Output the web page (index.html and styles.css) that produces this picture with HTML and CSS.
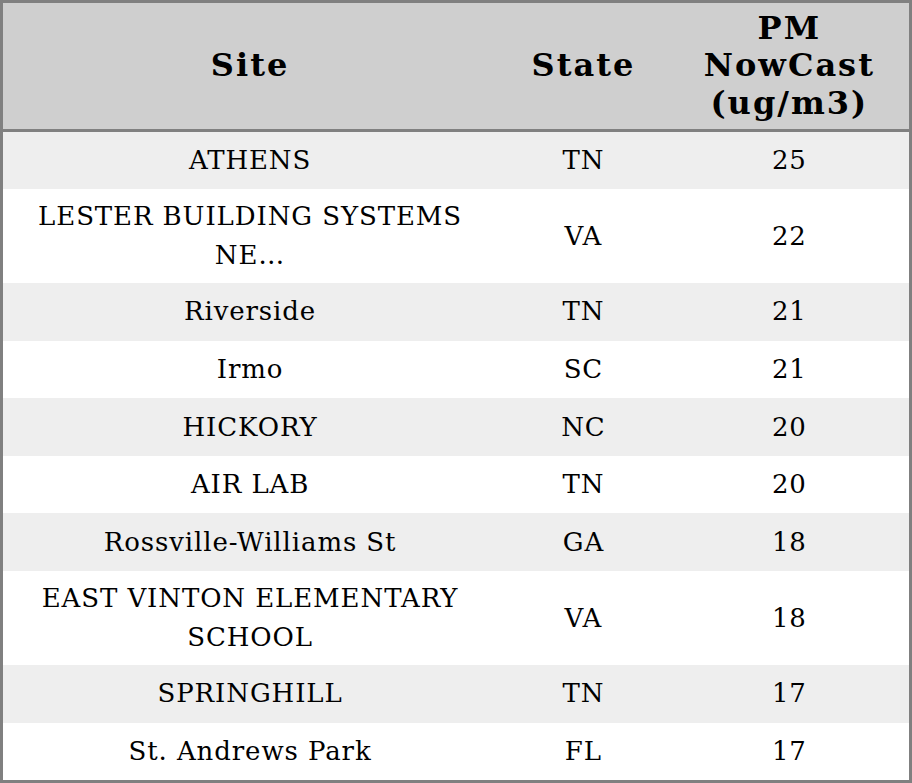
FILE: index.html
```html
<!DOCTYPE html>
<html>
<head>
<meta charset="utf-8">
<link rel="stylesheet" href="styles.css">
</head>
<body>
<table class="aq-table">
  <colgroup>
    <col class="col-site">
    <col class="col-state">
    <col class="col-pm">
  </colgroup>
  <thead>
    <tr>
      <th>Site</th>
      <th>State</th>
      <th>PM NowCast (ug/m3)</th>
    </tr>
  </thead>
  <tbody>
    <tr><td>ATHENS</td><td>TN</td><td>25</td></tr>
    <tr><td>LESTER BUILDING SYSTEMS NE…</td><td>VA</td><td>22</td></tr>
    <tr><td>Riverside</td><td>TN</td><td>21</td></tr>
    <tr><td>Irmo</td><td>SC</td><td>21</td></tr>
    <tr><td>HICKORY</td><td>NC</td><td>20</td></tr>
    <tr><td>AIR LAB</td><td>TN</td><td>20</td></tr>
    <tr><td>Rossville-Williams St</td><td>GA</td><td>18</td></tr>
    <tr><td>EAST VINTON ELEMENTARY SCHOOL</td><td>VA</td><td>18</td></tr>
    <tr><td>SPRINGHILL</td><td>TN</td><td>17</td></tr>
    <tr><td>St. Andrews Park</td><td>FL</td><td>17</td></tr>
  </tbody>
</table>
</body>
</html>
```
FILE: styles.css
```css
html, body {
  margin: 0;
  padding: 0;
  background: #ffffff;
}

.aq-table {
  width: 912px;
  border-collapse: collapse;
  border: 3px solid #808080;
  font-family: "DejaVu Serif", serif;
  color: #000;
  table-layout: fixed;
}

.col-site { width: 494px; }
.col-state { width: 172px; }
.col-pm { width: 240px; }

.aq-table th {
  background: #cfcfcf;
  font-size: 32px;
  font-weight: bold;
  letter-spacing: 2px;
  line-height: 37.5px;
  padding: 6.5px 6px;
  text-align: center;
  border-bottom: 3px solid #808080;
}

.aq-table td {
  font-size: 26px;
  letter-spacing: 0.9px;
  line-height: 39px;
  padding: 8px 10px;
  height: 41.6px;
  text-align: center;
  vertical-align: middle;
}

.aq-table tbody tr:nth-child(odd) td {
  background: #eeeeee;
}
```
